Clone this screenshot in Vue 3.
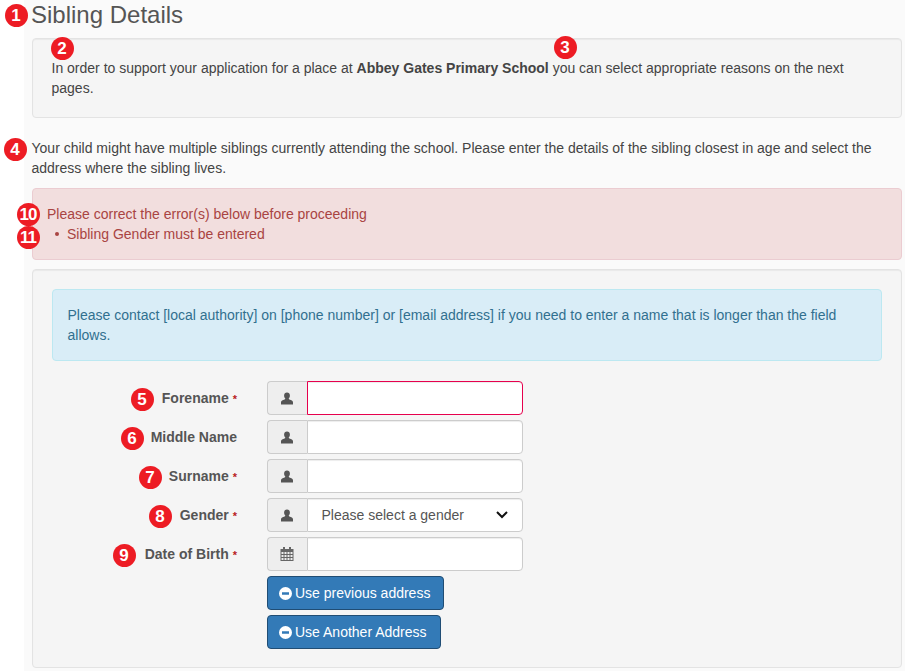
<script setup>
const badges = [
  { n: 1, x: 16, y: 15 }, { n: 2, x: 62, y: 48 }, { n: 3, x: 565, y: 47 }, { n: 4, x: 15, y: 149 },
  { n: 10, x: 28, y: 214 }, { n: 11, x: 28, y: 237 }, { n: 5, x: 142, y: 399 }, { n: 6, x: 132, y: 438 },
  { n: 7, x: 150, y: 477 }, { n: 8, x: 160, y: 516 }, { n: 9, x: 124, y: 555 },
]
const fields = [
  { label: 'Forename', req: true, error: true },
  { label: 'Middle Name' },
  { label: 'Surname', req: true },
  { label: 'Gender', req: true, select: true },
  { label: 'Date of Birth', req: true, calendar: true },
]
</script>

<template>
  <div class="page">
    <main class="content">
      <h1 class="title">Sibling Details</h1>
      <div class="well intro">
        In order to support your application for a place at <strong>Abbey Gates Primary School</strong> you can select appropriate reasons on the next pages.
      </div>
      <p class="lead">Your child might have multiple siblings currently attending the school. Please enter the details of the sibling closest in age and select the address where the sibling lives.</p>
      <div class="alert-error">
        <div>Please correct the error(s) below before proceeding</div>
        <div class="error-item"><span class="dot"></span>Sibling Gender must be entered</div>
      </div>
      <section class="well form-well">
        <div class="info">Please contact [local authority] on [phone number] or [email address] if you need to enter a name that is longer than the field allows.</div>
        <div class="row" v-for="f in fields" :key="f.label">
          <label class="label">{{ f.label }}<span v-if="f.req" class="req">*</span></label>
          <div class="group">
            <span class="addon">
              <svg v-if="f.calendar" width="14" height="14" viewBox="0 0 14 14"><path fill="#666" fill-rule="evenodd" d="M3 0h2v2h4V0h2v2h2.500v12H.5V2H3zM1.500 5v2h2V5zm3 0v2h2V5zm3 0v2h2V5zm3 0v2h2V5zm-9 3v2h2V8zm3 0v2h2V8zm3 0v2h2V8zm3 0v2h2V8zm-9 3v2h2v-2zm3 0v2h2v-2zm3 0v2h2v-2zm3 0v2h2v-2z"/></svg>
              <svg v-else width="12" height="13" viewBox="0 0 12 13"><path fill="#555" d="M6 .5c1.800 0 2.900 1.300 2.900 3 0 1.200-.5 2.300-1.200 3 0 .5.200.8.700 1C10.300 8 12 8.500 12 10.200V12.500H0v-2.300C0 8.500 1.700 8 3.600 7.500c.5-.2.700-.5.700-1-.7-.7-1.200-1.800-1.200-3C3.100 1.800 4.200.5 6 .5z"/></svg>
            </span>
            <div v-if="f.select" class="select-wrap">
              <select class="control select"><option>Please select a gender</option></select>
              <svg class="chevron" width="12" height="8" viewBox="0 0 12 8"><path fill="none" stroke="#111" stroke-width="2" d="M1 1l5 5 5-5"/></svg>
            </div>
            <input v-else class="control" :class="{ invalid: f.error }" type="text" />
          </div>
        </div>
        <div class="buttons">
          <button class="btn" type="button"><svg width="13" height="13" viewBox="0 0 13 13"><path fill="#fff" fill-rule="evenodd" d="M6.500 0a6.500 6.500 0 1 1 0 13 6.500 6.500 0 0 1 0-13zM3 5.300v2.400h7V5.300z"/></svg>Use previous address</button>
          <button class="btn" type="button"><svg width="13" height="13" viewBox="0 0 13 13"><path fill="#fff" fill-rule="evenodd" d="M6.500 0a6.500 6.500 0 1 1 0 13 6.500 6.500 0 0 1 0-13zM3 5.300v2.400h7V5.300z"/></svg>Use Another Address</button>
        </div>
      </section>
    </main>
    <span v-for="b in badges" :key="b.n" class="badge" :class="{ wide: b.n > 9 }" :style="{ left: b.x + 'px', top: b.y + 'px' }">{{ b.n }}</span>
  </div>
</template>

<style>
html, body { background: #fff; }
</style>

<style scoped>
.page {
  position: relative;
  width: 905px;
  height: 671px;
  overflow: hidden;
  font-family: "Liberation Sans", Arial, sans-serif;
  font-size: 14px;
  line-height: 20px;
  color: #444;
}
.content {
  margin-left: 24px;
  height: 671px;
  box-sizing: border-box;
  padding: 0 3px 0 8px;
  background: #fafafa;
}
.title {
  margin: 0 0 10px -1px;
  padding-top: 2px;
  font-size: 24px;
  font-weight: 400;
  line-height: 26px;
  color: #555;
}
.well {
  box-sizing: border-box;
  background: #f5f5f5;
  border: 1px solid #e3e3e3;
  border-radius: 4px;
  box-shadow: inset 0 1px 1px rgba(0, 0, 0, .05);
  padding: 19px;
}
.intro { height: 80px; padding-left: 18.500px; }
.lead { margin: 20px 0 10px -0.500px; }
.alert-error {
  box-sizing: border-box;
  height: 72px;
  padding: 15px 14px;
  background: #f2dede;
  border: 1px solid #ebccd1;
  border-radius: 4px;
  color: #a94442;
}
.error-item {
  display: flex;
  align-items: center;
  padding-left: 8px;
}
.dot {
  width: 4px;
  height: 4px;
  margin-right: 8px;
  border-radius: 50%;
  background: #a94442;
}
.form-well { margin-top: 9px; height: 399px; }
.info {
  box-sizing: border-box;
  height: 72px;
  padding: 15px 15px 15px 14.500px;
  margin-bottom: 20px;
  background: #d9edf7;
  border: 1px solid #bce8f1;
  border-radius: 4px;
  color: #31708f;
}
.row {
  display: flex;
  align-items: center;
  height: 34px;
  margin-bottom: 5px;
}
.label {
  width: 185px;
  text-align: right;
  font-weight: 700;
  color: #555;
}
.req {
  color: #b81c23;
  font-size: 11px;
  margin-left: 4px;
}
.group {
  display: flex;
  margin-left: 30px;
  width: 256px;
  height: 34px;
}
.addon {
  box-sizing: border-box;
  flex: 0 0 40px;
  display: flex;
  align-items: center;
  justify-content: center;
  padding-right: 1px;
  background: #eee;
  border: 1px solid #ccc;
  border-right: 0;
  border-radius: 4px 0 0 4px;
}
.control {
  box-sizing: border-box;
  flex: 1;
  min-width: 0;
  height: 34px;
  padding: 6px 12px;
  background: #fff;
  border: 1px solid #ccc;
  border-radius: 0 4px 4px 0;
  box-shadow: inset 0 1px 1px rgba(0, 0, 0, .075);
  font: 14px/20px "Liberation Sans", Arial, sans-serif;
  color: #555;
}
.invalid { border-color: #e6004d; }
.select-wrap {
  position: relative;
  flex: 1;
  display: flex;
  min-width: 0;
}
.select {
  appearance: none;
  padding-left: 13.500px;
}
.chevron {
  position: absolute;
  top: 13px;
  right: 15px;
  pointer-events: none;
}
.buttons {
  margin-left: 215px;
  display: flex;
  flex-direction: column;
  align-items: flex-start;
  gap: 5px;
}
.btn {
  display: inline-flex;
  align-items: center;
  gap: 3px;
  height: 34px;
  box-sizing: border-box;
  padding: 6px 13px 6px 11px;
  background: #337ab7;
  border: 1px solid #204d74;
  border-radius: 4px;
  color: #fff;
  font: 14px/20px "Liberation Sans", Arial, sans-serif;
}
.badge {
  position: absolute;
  box-sizing: border-box;
  width: 23px;
  height: 23px;
  margin: -11.500px 0 0 -11.500px;
  border-radius: 50%;
  background: #ed1c24;
  color: #fff;
  font-weight: 700;
  font-size: 17px;
  line-height: 23px;
  text-align: center;
}
.badge.wide { letter-spacing: -1px; }
</style>
